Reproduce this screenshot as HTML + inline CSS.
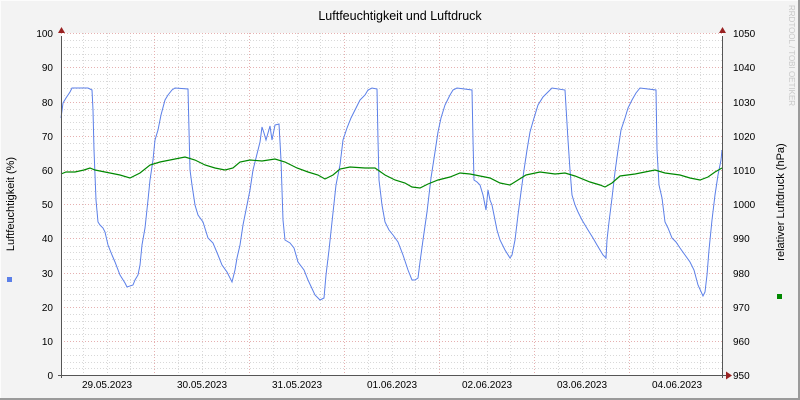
<!DOCTYPE html>
<html><head><meta charset="utf-8"><style>
html,body{margin:0;padding:0;background:#f3f3f3}
svg{display:block}
text{font-family:"Liberation Sans","DejaVu Sans",sans-serif;font-size:10px;fill:#000}
</style></head><body>
<svg width="800" height="400" viewBox="0 0 800 400" xmlns="http://www.w3.org/2000/svg">
<rect x="0" y="0" width="800" height="400" fill="#f3f3f3"/>
<line x1="0" y1="0.5" x2="800" y2="0.5" stroke="#fcfcfc"/>
<line x1="0.5" y1="0" x2="0.5" y2="400" stroke="#fcfcfc"/>
<line x1="0" y1="399" x2="800" y2="399" stroke="#9a9a9a" stroke-width="2"/>
<line x1="799" y1="0" x2="799" y2="400" stroke="#9a9a9a" stroke-width="2"/>
<rect x="61" y="33" width="662" height="342" fill="#fff"/>
<g id="grid" stroke-width="1" stroke-dasharray="1,2">
<g stroke="#d8d8d8">
<path d="M61 40.5H723M61 47.5H723M61 54.5H723M61 60.5H723M61 74.5H723M61 81.5H723M61 88.5H723M61 95.5H723M61 109.5H723M61 115.5H723M61 122.5H723M61 129.5H723M61 143.5H723M61 150.5H723M61 157.5H723M61 163.5H723M61 177.5H723M61 184.5H723M61 191.5H723M61 198.5H723M61 211.5H723M61 218.5H723M61 225.5H723M61 232.5H723M61 246.5H723M61 252.5H723M61 259.5H723M61 266.5H723M61 280.5H723M61 287.5H723M61 294.5H723M61 300.5H723M61 314.5H723M61 321.5H723M61 328.5H723M61 334.5H723M61 348.5H723M61 355.5H723M61 362.5H723M61 368.5H723"/>
<path d="M83.5 33V375M107.5 33V375M130.5 33V375M178.5 33V375M202.5 33V375M225.5 33V375M273.5 33V375M297.5 33V375M320.5 33V375M368.5 33V375M392.5 33V375M415.5 33V375M463.5 33V375M487.5 33V375M510.5 33V375M558.5 33V375M582.5 33V375M605.5 33V375M653.5 33V375M677.5 33V375M700.5 33V375"/>
</g>
<g stroke="#e6b0b0">
<path d="M61 33.5H723M61 67.5H723M61 102.5H723M61 136.5H723M61 170.5H723M61 204.5H723M61 238.5H723M61 273.5H723M61 307.5H723M61 341.5H723"/>
<path d="M154.5 33V375M249.5 33V375M344.5 33V375M439.5 33V375M534.5 33V375M629.5 33V375"/>
</g>
</g>
<polyline fill="none" stroke="#5b7fe8" stroke-width="1" points="61,118 63,103 66,98 68,95 70,92 72,88 88,88 92,90 93,110 94,150 96,200 98,222 100,225 103,228 105,232 108,245 112,255 115,262 120,275 125,283 127,287 133,285 135,280 138,275 140,265 142,245 145,228 148,200 150,180 153,160 155,140 158,130 161,115 165,100 168,95 172,90 175,88 188,89 189,130 190,170 192,185 195,205 198,215 203,222 208,238 213,243 218,255 222,265 227,272 232,282 235,270 237,258 240,245 243,225 246,210 250,190 253,170 256,158 260,142 262,127 264,133 266,140 270,126 272,140 275,125 279,124 281,160 283,220 285,240 290,243 294,248 298,262 304,270 308,280 315,295 320,300 324,298 326,275 329,250 332,222 336,185 340,165 343,140 347,128 351,118 355,110 360,100 365,95 368,90 372,88 377,89 378,140 379,180 382,205 385,222 389,230 393,235 398,242 403,255 408,270 412,280 415,280 418,278 420,262 423,240 427,212 431,178 435,152 438,132 441,118 445,105 450,95 453,90 457,88 472,90 473,140 474,180 477,182 480,185 483,195 486,210 488,190 490,200 492,205 494,215 497,230 500,240 505,250 510,258 512,255 515,240 518,215 521,192 524,170 527,150 530,132 534,118 538,105 543,97 548,92 552,88 565,90 568,140 570,170 572,195 575,205 578,212 582,220 588,230 593,238 597,245 600,250 603,255 606,258 607,240 609,222 612,198 615,172 618,150 621,130 625,118 628,108 632,100 636,93 640,88 656,90 657,150 659,185 662,198 665,222 668,228 672,238 676,242 680,248 685,255 690,262 694,270 698,285 703,296 705,292 707,275 709,250 712,220 715,195 718,175 721,160 722,150"/>
<polyline fill="none" stroke="#008800" stroke-width="1.2" points="61,174 66,172 75,172 84,170 90,168 95,170 110,173 120,175 130,178 140,173 150,165 160,162 170,160 185,157 195,160 205,165 215,168 225,170 233,168 240,162 250,160 262,161 275,159 285,162 297,168 308,172 318,175 325,179 333,175 340,169 350,167 365,168 375,168 385,175 395,180 405,183 412,187 420,188 428,184 438,180 450,177 460,173 470,174 480,176 490,178 500,183 510,185 518,180 526,175 540,172 555,174 565,173 575,176 590,182 600,185 605,187 612,183 620,176 635,174 645,172 655,170 665,173 680,175 690,178 700,180 708,177 715,172 722,168"/>
<g stroke="#555" stroke-width="1">
<line x1="61.5" y1="36" x2="61.5" y2="378"/>
<line x1="722.5" y1="36" x2="722.5" y2="378"/>
<line x1="58" y1="375.5" x2="726" y2="375.5"/>
</g>
<polygon points="58,33 65,33 61.5,27" fill="#992222"/>
<polygon points="719,33 726,33 722.5,27" fill="#992222"/>
<polygon points="726,371.5 726,379.5 732,375.5" fill="#992222"/>
<text x="400" y="20" text-anchor="middle" style="font-size:12.5px">Luftfeuchtigkeit und Luftdruck</text>
<g text-anchor="end">
<text x="53" y="37">100</text><text x="53" y="71">90</text><text x="53" y="106">80</text><text x="53" y="140">70</text><text x="53" y="174">60</text><text x="53" y="208">50</text><text x="53" y="242">40</text><text x="53" y="277">30</text><text x="53" y="311">20</text><text x="53" y="345">10</text><text x="53" y="379">0</text>
</g>
<g>
<text x="733" y="37">1050</text><text x="733" y="71">1040</text><text x="733" y="106">1030</text><text x="733" y="140">1020</text><text x="733" y="174">1010</text><text x="733" y="208">1000</text><text x="733" y="242">990</text><text x="733" y="277">980</text><text x="733" y="311">970</text><text x="733" y="345">960</text><text x="733" y="379">950</text>
</g>
<g text-anchor="middle">
<text x="107" y="388">29.05.2023</text><text x="202" y="388">30.05.2023</text><text x="297" y="388">31.05.2023</text><text x="392" y="388">01.06.2023</text><text x="487" y="388">02.06.2023</text><text x="582" y="388">03.06.2023</text><text x="677" y="388">04.06.2023</text>
</g>
<text transform="translate(14,204) rotate(-90)" text-anchor="middle" style="font-size:11px">Luftfeuchtigkeit (%)</text>
<rect x="7" y="277" width="5" height="5" fill="#5b7fe8"/>
<text transform="translate(784,202) rotate(-90)" text-anchor="middle" style="font-size:11px">relativer Luftdruck (hPa)</text>
<rect x="777" y="294" width="5" height="5" fill="#008800"/>
<text transform="translate(789,5) rotate(90)" style="font-size:8px;fill:#c8c8c8">RRDTOOL / TOBI OETIKER</text>
</svg>
</body></html>
